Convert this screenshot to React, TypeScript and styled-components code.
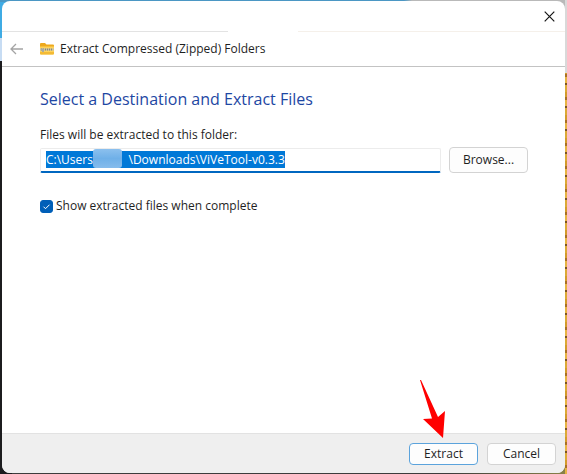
import React, { useEffect, useRef, useState } from "react";
import styled, { createGlobalStyle } from "styled-components";

const GlobalStyle = createGlobalStyle`
  *, *::before, *::after { box-sizing: border-box; }
  body { margin: 0; }
  body, button, input {
    font-family: "Open Sans", "Noto Sans", sans-serif;
    font-size: 12px;
    line-height: 16px;
    color: #1f1f1f;
  }
`;

const Desktop = styled.main`
  display: flex;
  min-height: 100vh;
  padding: 1px 2px 1px 2px;
  background:
    linear-gradient(to bottom, #d9d9d9 73px, transparent 73px) right / 2px 100% no-repeat,
    repeating-linear-gradient(to bottom, #d29a2c 0 5px, #a87024 5px 8px, #e6b343 8px 14px, #7b5422 14px 16px, #dba936 16px 23px) right / 2px 100% no-repeat,
    linear-gradient(to right, #4b97c4 404px, #b9b9b9 412px) top / 100% 2px no-repeat,
    linear-gradient(to bottom, #3fabe4 38px, #c7dcf3 38px 61px, #1c1c1e 61px) left / 12px 100% no-repeat,
    linear-gradient(to right, #3c3c3c 450px, #8a8248) bottom / 100% 12px no-repeat,
    #b9b9b9;
`;

const Dialog = styled.section`
  position: relative;
  display: flex;
  flex: 1;
  flex-direction: column;
  min-width: 0;
  overflow: hidden;
  border-radius: 8px;
  background: #fff;
`;

const TitleBar = styled.div`
  display: flex;
  justify-content: flex-end;
  height: 30px;
`;

const CloseButton = styled.button`
  display: grid;
  place-items: center;
  width: 31px;
  padding: 0;
  border: 0;
  background: transparent;
`;

const Header = styled.header`
  display: flex;
  align-items: center;
  height: 36px;
  padding: 0 8px;
  border-bottom: 1px solid #c3c3c3;
  background: linear-gradient(to right, #e3e3e3 226px, #fff 226px 296px, #f5f0ea 296px) top / 100% 1px no-repeat;
`;

const BackButton = styled.button`
  display: flex;
  margin-right: 16px;
  padding: 0;
  border: 0;
  background: transparent;
`;

const HeaderTitle = styled.span`
  margin-left: 5px;
`;

const Content = styled.div`
  flex: 1;
  padding: 21px 37px 0 38px;
`;

const Heading = styled.h1`
  margin: 0 0 17px;
  font-size: 16px;
  font-weight: 400;
  line-height: 22px;
  color: #1e47a3;
`;

const FieldLabel = styled.label`
  display: block;
  margin-bottom: 4px;
`;

const PathRow = styled.div`
  display: flex;
  align-items: center;
  gap: 8px;
`;

const PathField = styled.div`
  position: relative;
  flex: 1;
  display: flex;
  min-width: 0;
`;

const PathInput = styled.input`
  width: 100%;
  height: 25px;
  padding: 2px 5px;
  border: 1px solid #ececec;
  border-bottom: 2px solid #0067c0;
  border-radius: 2px;
  outline: 0;
  background: #fff;
  &::selection { background: #0078d7; color: #fff; }
`;

const Redaction = styled.span`
  position: absolute;
  top: 1px;
  left: 53px;
  width: 29px;
  height: 19px;
  border-radius: 3px;
  background: linear-gradient(#8cc0ee, #6fb0e8 50%, #86bcec);
`;

const PushButton = styled.button<{ $size: "tall" | "short"; $primary?: boolean }>`
  width: ${(p) => (p.$size === "tall" ? 79 : 69)}px;
  height: ${(p) => (p.$size === "tall" ? 26 : 22)}px;
  padding: 0;
  border: 1px solid ${(p) => (p.$primary ? "#5ba3dc" : "#d3d3d3")};
  border-radius: 4px;
  background: #fdfdfd;
`;

const CheckLabel = styled.label`
  display: flex;
  align-items: center;
  width: fit-content;
  margin-top: 25px;
`;

const CheckBox = styled.input`
  appearance: none;
  width: 13px;
  height: 13px;
  margin: 0 3px 0 0;
  border: 1px solid #005fb8;
  border-radius: 3px;
  background: #fff;
  &:checked {
    background: #005fb8 url("data:image/svg+xml,%3Csvg xmlns='http://www.w3.org/2000/svg' viewBox='0 0 11 11'%3E%3Cpath d='M2.5 5.7l2 2 4-4' fill='none' stroke='white'/%3E%3C/svg%3E") center / 11px no-repeat;
  }
`;

const Footer = styled.footer`
  display: flex;
  justify-content: flex-end;
  gap: 9px;
  height: 40px;
  padding: 9px 9px 0;
  border-top: 1px solid #e2e2e2;
  background: #efefef;
`;

const Pointer = styled.svg`
  position: absolute;
  right: 119px;
  bottom: 34px;
  pointer-events: none;
`;

function ZipFolderIcon() {
  return (
    <svg width="16" height="14" viewBox="0 0 16 14" aria-hidden="true">
      <path d="M1 2Q1 1 2 1H6L7.5 2.5H14Q15 2.5 15 3.5V12H1Z" fill="#eda91d" />
      <path d="M1 4.5H15V11.5Q15 12.5 14 12.5H2Q1 12.5 1 11.5Z" fill="#ffd35a" />
      <path d="M1 10H15V11.5Q15 12.5 14 12.5H2Q1 12.5 1 11.5Z" fill="#f3ba35" />
      <path d="M1 7.5H15" stroke="#c7c1a5" strokeWidth="2" />
      <path d="M2 7.5H14" stroke="#8b8979" strokeWidth="2" strokeDasharray="1 1" />
      <path d="M2 6.5H5V10H3V8.5H2Z" fill="#a8aaa4" />
    </svg>
  );
}

export default function App() {
  const pathRef = useRef<HTMLInputElement>(null);
  const [path, setPath] = useState("C:\\Users\\" + "\u00a0".repeat(10) + "\\Downloads\\ViVeTool-v0.3.3");

  useEffect(() => {
    pathRef.current?.focus();
    pathRef.current?.select();
  }, []);

  return (
    <>
      <GlobalStyle />
      <Desktop>
        <Dialog role="dialog" aria-labelledby="dialog-title">
          <TitleBar>
            <CloseButton aria-label="Close">
              <svg width="11" height="11" viewBox="0 0 11 11">
                <path d="M.7.7l9.6 9.6M10.3.7L.7 10.3" stroke="#151515" strokeWidth="1.2" />
              </svg>
            </CloseButton>
          </TitleBar>
          <Header>
            <BackButton aria-label="Back" disabled>
              <svg width="13" height="12" viewBox="0 0 13 12" fill="none" stroke="#a4a4a4" strokeWidth="1.3">
                <path d="M13 6H1M6 1L1 6l5 5" />
              </svg>
            </BackButton>
            <ZipFolderIcon />
            <HeaderTitle id="dialog-title">Extract Compressed (Zipped) Folders</HeaderTitle>
          </Header>
          <Content>
            <Heading>Select a Destination and Extract Files</Heading>
            <FieldLabel htmlFor="path">Files will be extracted to this folder:</FieldLabel>
            <PathRow>
              <PathField>
                <PathInput id="path" ref={pathRef} value={path} onChange={(e) => setPath(e.target.value)} spellCheck={false} />
                <Redaction />
              </PathField>
              <PushButton $size="tall">Browse...</PushButton>
            </PathRow>
            <CheckLabel>
              <CheckBox type="checkbox" defaultChecked />
              Show extracted files when complete
            </CheckLabel>
          </Content>
          <Footer>
            <PushButton $size="short" $primary>Extract</PushButton>
            <PushButton $size="short">Cancel</PushButton>
          </Footer>
          <Pointer width="27" height="60" viewBox="0 0 27 60" aria-hidden="true">
            <path d="M1 1L2 1L19 38L26 32L24 59L4 40L13 39.5Z" fill="#f00" />
          </Pointer>
        </Dialog>
      </Desktop>
    </>
  );
}
